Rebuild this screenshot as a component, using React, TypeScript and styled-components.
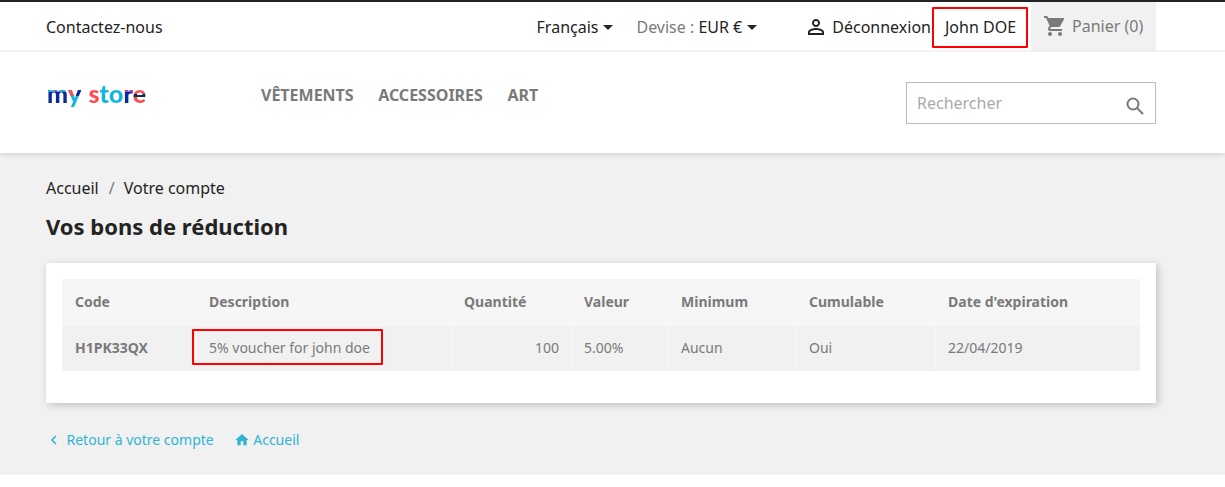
import { createGlobalStyle } from "styled-components";
import styled from "styled-components";

const GlobalStyle = createGlobalStyle`
  html, body {
    margin: 0;
    padding: 0;
    background: #fff;
    font-family: "Noto Sans", "Open Sans", sans-serif;
    color: #232323;
    overflow: hidden;
  }
  *, *::after { box-sizing: border-box; }
`;

const Page = styled.div`
  width: 1225px;
  height: 487px;
  display: flex;
  flex-direction: column;
`;

const TopBar = styled.nav`
  height: 52px;
  flex: none;
  border-top: 2px solid #232323;
  border-bottom: 2px solid #f6f6f6;
  padding: 0 69px 0 46px;
  display: flex;
  align-items: stretch;
  font-size: 16px;
`;

const Contact = styled.a`
  margin: 2px auto 0 0;
  align-self: center;
`;

const Dropdown = styled.span<{ $gap: number }>`
  align-self: center;
  margin: 2px ${(p) => p.$gap}px 0 0;
  display: inline-flex;
  align-items: center;
  gap: 5px;
`;

const Muted = styled.span`
  color: #7a7a7a;
`;

const Caret = styled.i`
  width: 0;
  height: 0;
  border-left: 5px solid transparent;
  border-right: 5px solid transparent;
  border-top: 5px solid #232323;
`;

const SignOut = styled.a`
  display: inline-flex;
  align-items: center;
  align-self: center;
  margin-top: 2px;
  gap: 4px;
`;

const UserName = styled.a`
  width: 96px;
  height: 41px;
  margin: 5px 3px 0 1px;
  border: 2px solid #f00;
  border-radius: 1px;
  padding: 0 0 2px 1px;
  display: flex;
  align-items: center;
  justify-content: center;
`;

const Cart = styled.a`
  width: 125px;
  background: #f1f1f1;
  color: #7a7a7a;
  display: flex;
  align-items: center;
  gap: 5px;
  padding: 0 0 2px 12px;
  margin-bottom: -2px;
`;

const Header = styled.header`
  height: 101px;
  flex: none;
  background: #fff;
  box-shadow: 0 2px 5px 0 rgba(0, 0, 0, 0.11);
  position: relative;
  padding: 30px 69px 0 46px;
  display: flex;
  align-items: flex-start;
`;

const Logo = styled.a`
  width: 215px;
  margin-top: -3px;
  padding-left: 1px;
  font-family: "Lato", sans-serif;
  font-weight: 900;
  font-size: 25px;
  line-height: 28px;
  display: flex;
  filter: blur(0.3px);
`;

const LogoLetter = styled.span<{ $fill: string; $gap?: number }>`
  background: ${(p) => p.$fill};
  -webkit-background-clip: text;
  background-clip: text;
  color: transparent;
  margin-left: ${(p) => p.$gap ?? 0}px;
`;

const Menu = styled.ul`
  list-style: none;
  margin: -1px auto 0 0;
  padding: 0;
  display: flex;
  gap: 24.5px;
`;

const MenuItem = styled.li`
  font-size: 16px;
  font-weight: 700;
  line-height: 28px;
  color: #7a7a7a;
`;

const SearchBox = styled.div`
  width: 250px;
  height: 42px;
  border: 1px solid #bdbdbd;
  display: flex;
  align-items: center;
  justify-content: space-between;
  padding: 0 10px 0 10px;
  font-size: 16px;
  color: #acaaa6;
  svg {
    margin-top: 6px;
  }
`;

const Main = styled.main`
  flex: 1;
  background: #f1f1f1;
  padding: 24px 69px 0 46px;
`;

const Crumbs = styled.div`
  display: flex;
  gap: 10px;
  font-size: 16px;
  line-height: 22px;
`;

const CrumbSeparator = styled.span`
  color: #7a7a7a;
  margin-right: -1px;
`;

const Title = styled.h1`
  margin: 12px 0 22px;
  font-size: 22px;
  line-height: 30px;
  font-weight: 700;
`;

const Card = styled.section`
  background: #fff;
  height: 140px;
  padding: 16px;
  box-shadow: 2px 2px 8px 0 rgba(0, 0, 0, 0.2);
`;

const Table = styled.table`
  width: 100%;
  table-layout: fixed;
  border-collapse: collapse;
  font-size: 14px;
  color: #7a7a7a;
`;

const HeadCell = styled.th<{ $w: number }>`
  width: ${(p) => p.$w}px;
  height: 47px;
  padding: 0 13px 2px;
  text-align: left;
  font-weight: 700;
  background: #f6f6f6;
`;

const Cell = styled.td<{ $right?: boolean; $strong?: boolean }>`
  height: 45px;
  padding: 0 ${(p) => (p.$right ? 12 : 13)}px 2px 13px;
  background: #f1f1f1;
  box-shadow: inset 1px 0 0 #f6f6f6;
  text-align: ${(p) => (p.$right ? "right" : "left")};
  font-weight: ${(p) => (p.$strong ? 700 : 400)};
  &:first-child { box-shadow: none; }
`;

const Marked = styled.span`
  position: relative;
  &::after {
    content: "";
    position: absolute;
    left: -17px;
    top: -9px;
    width: 191px;
    height: 36px;
    border: 2px solid #f00;
    border-radius: 1px;
  }
`;

const Links = styled.div`
  margin-top: 26px;
  display: flex;
  gap: 20.5px;
  font-size: 14px;
  line-height: 22px;
  color: #2fb5d2;
`;

const FooterLink = styled.a<{ $gap: number }>`
  display: inline-flex;
  align-items: center;
  gap: ${(p) => p.$gap}px;
`;

const Footer = styled.footer`
  height: 13px;
  flex: none;
  background: #fff;
  border-top: 1px solid #f6f6f6;
`;

const columns = [
  ["Code", 134],
  ["Description", 255],
  ["Quantité", 120],
  ["Valeur", 97],
  ["Minimum", 128],
  ["Cumulable", 139],
  ["Date d'expiration", 205],
] as const;

// colour bands sit on the x-height of the letters, so each fill is top band + base
const band = (top: string, stop: number, base: string) =>
  `linear-gradient(${top}, ${top}) 0 0 / 100% ${stop}% no-repeat, ${base}`;

const logoLetters = [
  { c: "m", fill: `linear-gradient(90deg, #12b5e0 0 38%, #b04ab8 38% 62%, #12b5e0 62%) 0 0 / 100% 47% no-repeat, #0a2a9a` },
  { c: "y", fill: `linear-gradient(90deg, #ff4c5c 0 50%, #0a2a9a 50%) 0 0 / 100% 62% no-repeat, #12b5e0` },
  { c: "s", fill: "#ff4c4c", gap: 7 },
  { c: "t", fill: "#12b5e0" },
  { c: "o", fill: "#12b5e0" },
  { c: "r", fill: band("#b04ab8", 48, "#0a2a9a") },
  { c: "e", fill: "linear-gradient(180deg, #ff4c4c 0 53%, #0b3350 53% 63%, #ff4c4c 63% 100%)" },
];

export default function App() {
  return (
    <Page>
      <GlobalStyle />
      <TopBar>
        <Contact>Contactez-nous</Contact>
        <Dropdown $gap={23}>
          Français <Caret />
        </Dropdown>
        <Dropdown $gap={47}>
          <span>
            <Muted>Devise :</Muted> EUR €
          </span>
          <Caret />
        </Dropdown>
        <SignOut>
          <svg width="24" height="24" viewBox="0 0 24 24" fill="#232323">
            <path d="M12 5.9a2.1 2.1 0 1 1 0 4.2 2.1 2.1 0 0 1 0-4.2m0 9c2.97 0 6.1 1.46 6.1 2.1v1.1H5.9V17c0-.64 3.13-2.1 6.1-2.1M12 4C9.79 4 8 5.79 8 8s1.79 4 4 4 4-1.79 4-4-1.79-4-4-4zm0 9c-2.67 0-8 1.34-8 4v3h16v-3c0-2.66-5.33-4-8-4z" />
          </svg>
          Déconnexion
        </SignOut>
        <UserName>John DOE</UserName>
        <Cart>
          <svg width="24" height="24" viewBox="0 0 24 24" fill="#7a7a7a">
            <path d="M7 18c-1.1 0-1.99.9-1.99 2S5.9 22 7 22s2-.9 2-2-.9-2-2-2zM1 2v2h2l3.6 7.59-1.35 2.45c-.16.28-.25.61-.25.96 0 1.1.9 2 2 2h12v-2H7.42c-.14 0-.25-.11-.25-.25l.03-.12.9-1.63h7.45c.75 0 1.41-.41 1.75-1.03l3.58-6.49A1 1 0 0 0 20 4H5.21l-.94-2H1zm16 16c-1.1 0-1.99.9-1.99 2s.89 2 1.99 2 2-.9 2-2-.9-2-2-2z" />
          </svg>
          Panier (0)
        </Cart>
      </TopBar>
      <Header>
        <Logo>
          {logoLetters.map((l, i) => (
            <LogoLetter key={i} $fill={l.fill} $gap={l.gap}>
              {l.c}
            </LogoLetter>
          ))}
        </Logo>
        <Menu>
          <MenuItem>VÊTEMENTS</MenuItem>
          <MenuItem>ACCESSOIRES</MenuItem>
          <MenuItem>ART</MenuItem>
        </Menu>
        <SearchBox>
          Rechercher
          <svg width="20" height="20" viewBox="0 0 20 20" fill="none" stroke="#7a7a7a" strokeWidth="2">
            <circle cx="8" cy="8" r="5.5" />
            <path d="M12 12l6 6" />
          </svg>
        </SearchBox>
      </Header>
      <Main>
        <Crumbs>
          <span>Accueil</span>
          <CrumbSeparator>/</CrumbSeparator>
          <span>Votre compte</span>
        </Crumbs>
        <Title>Vos bons de réduction</Title>
        <Card>
          <Table>
            <thead>
              <tr>
                {columns.map(([label, w]) => (
                  <HeadCell key={label} $w={w}>
                    {label}
                  </HeadCell>
                ))}
              </tr>
            </thead>
            <tbody>
              <tr>
                <Cell $strong>H1PK33QX</Cell>
                <Cell>
                  <Marked>5% voucher for john doe</Marked>
                </Cell>
                <Cell $right>100</Cell>
                <Cell>5.00%</Cell>
                <Cell>Aucun</Cell>
                <Cell>Oui</Cell>
                <Cell>22/04/2019</Cell>
              </tr>
            </tbody>
          </Table>
        </Card>
        <Links>
          <FooterLink $gap={4.5}>
            <svg width="16" height="16" viewBox="0 0 16 16" fill="none" stroke="#2fb5d2" strokeWidth="1.6">
              <path d="M10 4L6 8l4 4" />
            </svg>
            Retour à votre compte
          </FooterLink>
          <FooterLink $gap={3}>
            <svg width="16" height="16" viewBox="0 0 24 24" fill="#2fb5d2">
              <path d="M10 20v-6h4v6h5v-8h3L12 3 2 12h3v8z" />
            </svg>
            Accueil
          </FooterLink>
        </Links>
      </Main>
      <Footer />
    </Page>
  );
}
